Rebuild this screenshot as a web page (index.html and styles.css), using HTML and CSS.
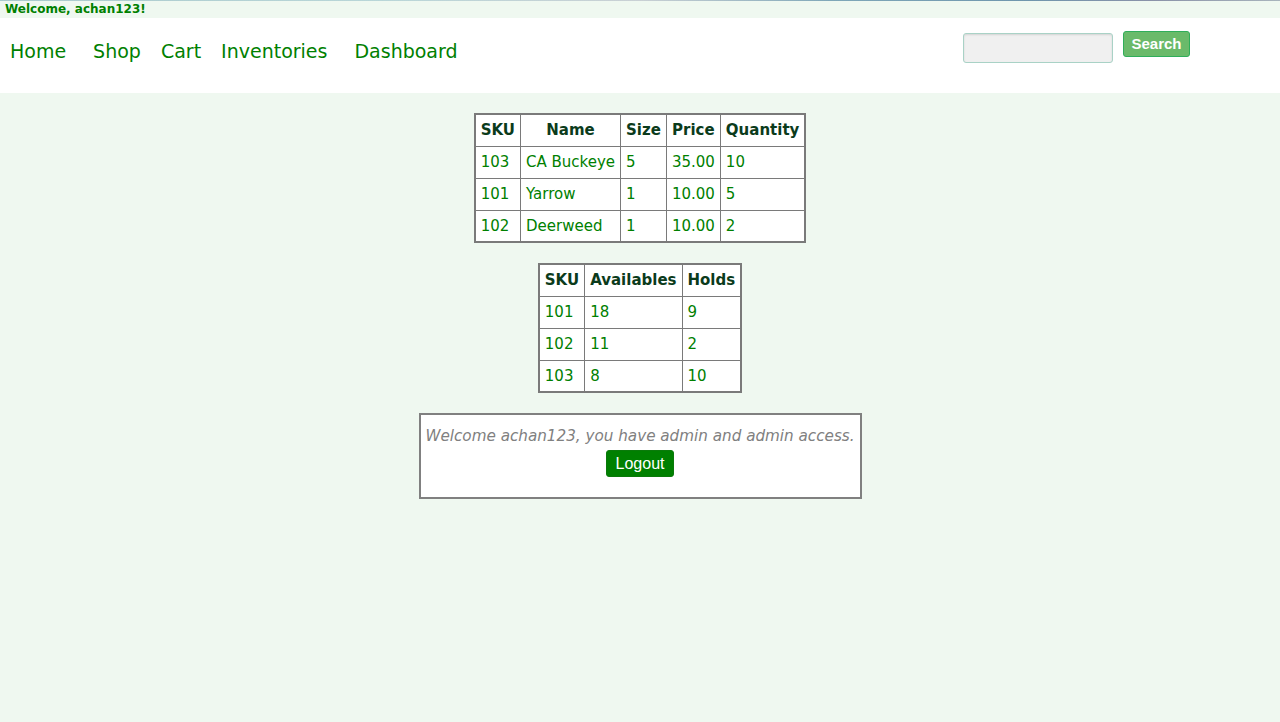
FILE: index.html
```html
<!DOCTYPE html>
<html>
<head>
<meta charset="utf-8">
<title>Dashboard</title>
<link rel="stylesheet" href="styles.css">
</head>
<body>
<div class="topline"></div>
<div class="welcome">Welcome, achan123!</div>
<header class="nav">
  <nav class="links">
    <a class="link home" href="#">Home</a>
    <a class="link" href="#">Shop</a>
    <a class="link" href="#">Cart</a>
    <a class="link wide" href="#">Inventories</a>
    <a class="link" href="#">Dashboard</a>
  </nav>
  <form class="search">
    <input class="search-input" type="text">
    <button class="search-btn" type="button">Search</button>
  </form>
</header>
<main class="main">
  <table class="grid">
    <tr><th>SKU</th><th class="c">Name</th><th>Size</th><th class="c">Price</th><th>Quantity</th></tr>
    <tr><td>103</td><td>CA Buckeye</td><td>5</td><td>35.00</td><td>10</td></tr>
    <tr><td>101</td><td>Yarrow</td><td>1</td><td>10.00</td><td>5</td></tr>
    <tr><td>102</td><td>Deerweed</td><td>1</td><td>10.00</td><td>2</td></tr>
  </table>
  <table class="grid grid2">
    <tr><th>SKU</th><th>Availables</th><th>Holds</th></tr>
    <tr><td>101</td><td>18</td><td>9</td></tr>
    <tr><td>102</td><td>11</td><td>2</td></tr>
    <tr><td>103</td><td>8</td><td>10</td></tr>
  </table>
  <div class="box">
    <p class="msg">Welcome achan123, you have admin and admin access.</p>
    <button class="logout" type="button">Logout</button>
  </div>
</main>
</body>
</html>
```
FILE: styles.css
```css
html, body {
  margin: 0;
  padding: 0;
  background: #eff8f0;
  font-family: "DejaVu Sans", Verdana, sans-serif;
}
.topline {
  height: 1px;
  background: linear-gradient(90deg, #a9c9cc 0%, #b9d6d8 30%, #c9d0d4 50%, #7fa7b8 65%, #6f96ad 80%, #8a92a8 90%, #a8b4bc 100%);
}
.welcome {
  height: 17px;
  line-height: 17px;
  padding-left: 5px;
  font-size: 12px;
  font-weight: bold;
  color: #008000;
}
.nav {
  height: 75px;
  background: #ffffff;
  display: flex;
  align-items: center;
  justify-content: space-between;
  padding: 0 90px 0 10px;
}
.links {
  display: flex;
  align-items: center;
  gap: 20px;
  margin-top: -10px;
}
.link {
  font-size: 19px;
  color: #008000;
  text-decoration: none;
}
.link.home {
  margin-right: 7px;
}
.link.wide {
  margin-right: 7px;
}
.search {
  display: flex;
  align-items: flex-start;
  gap: 10px;
  margin: 0;
  margin-top: -18px;
}
.search-input {
  box-sizing: border-box;
  width: 150px;
  height: 30px;
  margin-top: 2px;
  background: #f0f0f0;
  border: 1px solid #a9d2c6;
  border-radius: 3px;
  box-shadow: inset 0 1px 2px rgba(0,0,0,0.12);
}
.search-btn {
  box-sizing: border-box;
  width: 67px;
  height: 26px;
  padding: 0;
  background: #6aba6a;
  border: 1px solid #2fae5a;
  border-radius: 3px;
  color: #ffffff;
  font-family: "Liberation Sans", Arial, sans-serif;
  font-weight: bold;
  font-size: 15px;
}
.main {
  display: flex;
  flex-direction: column;
  align-items: center;
  padding-top: 20px;
  gap: 20px;
}
.grid {
  border-collapse: collapse;
  border: 2px solid #7a7a7a;
  background: #ffffff;
  font-size: 15px;
}
.grid th, .grid td {
  border: 1px solid #7a7a7a;
  height: 32px;
  box-sizing: border-box;
  padding: 0 5px;
  text-align: left;
  white-space: nowrap;
}
.grid th {
  color: #0b3b1b;
  font-weight: bold;
}
.grid th.c {
  text-align: center;
}
.grid td {
  color: #008000;
}
.box {
  box-sizing: border-box;
  width: 443px;
  height: 86px;
  border: 2px solid #808080;
  background: #ffffff;
  display: flex;
  flex-direction: column;
  align-items: center;
  padding-top: 12px;
}
.msg {
  margin: 0;
  font-size: 15.2px;
  font-style: italic;
  color: #808080;
  white-space: nowrap;
}
.logout {
  margin-top: 5px;
  box-sizing: border-box;
  width: 68px;
  height: 27px;
  padding: 0;
  background: #008000;
  border: 1px solid #0a7a0a;
  border-radius: 3px;
  color: #ffffff;
  font-family: "Liberation Sans", Arial, sans-serif;
  font-size: 16px;
}
```
